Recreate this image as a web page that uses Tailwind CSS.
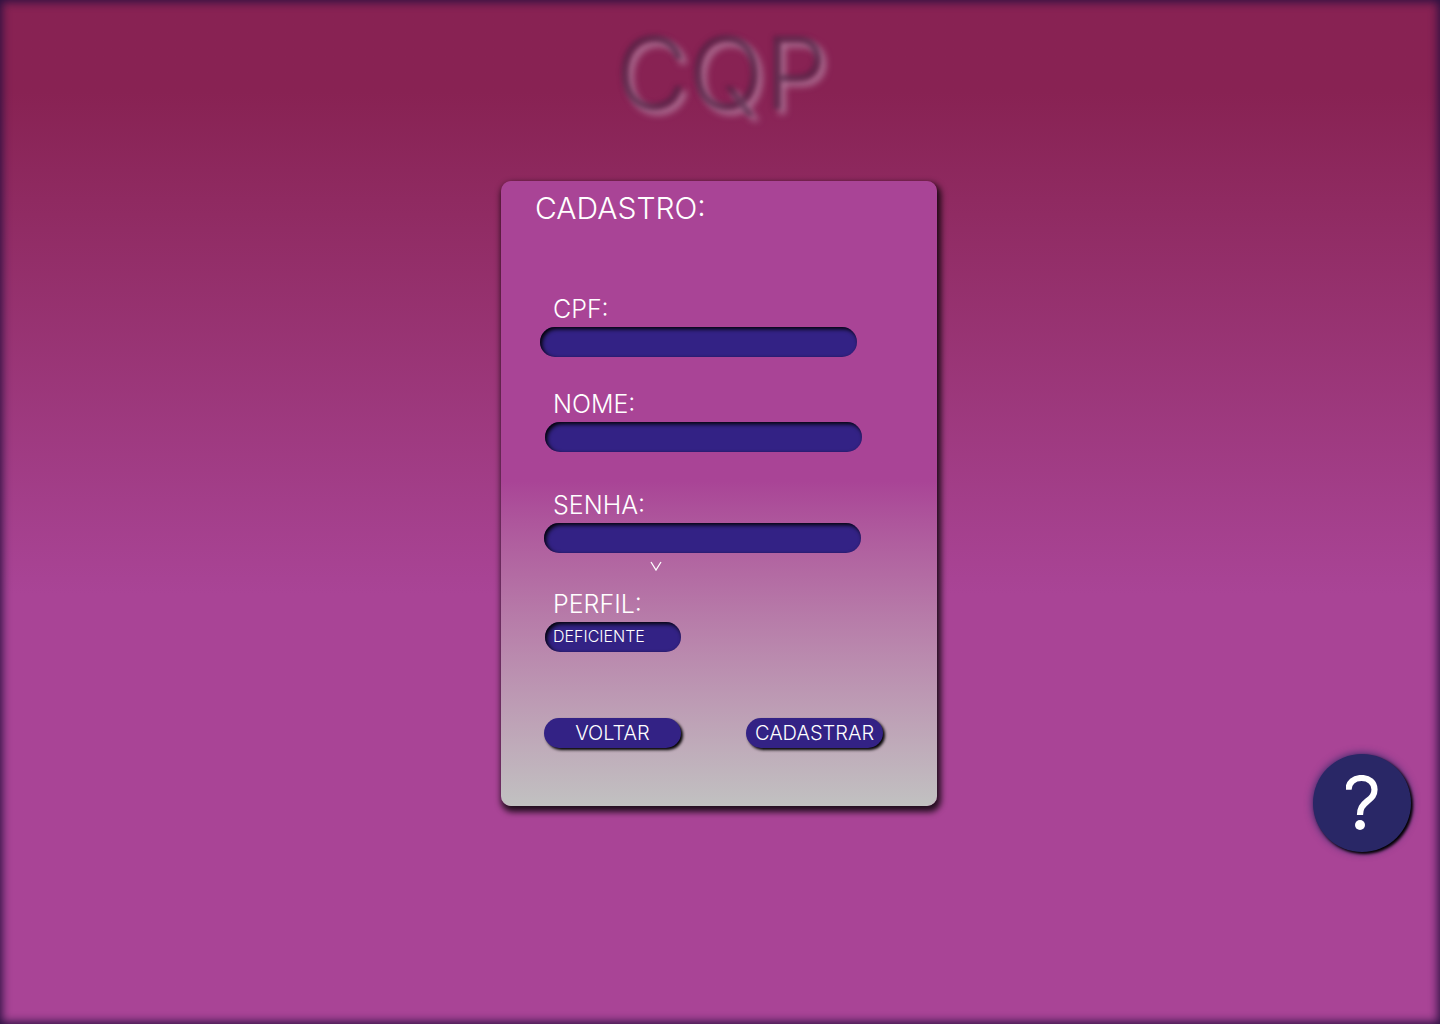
<!DOCTYPE html>
<html lang="pt-BR">
<head>
<meta charset="utf-8">
<meta name="viewport" content="width=device-width, initial-scale=1">
<title>CQP - Cadastro</title>
<script src="https://cdn.jsdelivr.net/npm/@tailwindcss/browser@4"></script>
</head>
<body class="min-h-screen bg-linear-to-b from-[#882253] from-9% to-[#a94496] to-58% font-['Inter',sans-serif] font-light text-white shadow-[inset_0_0_10px_2px_#2a1040]">
  <main class="flex min-h-screen flex-col items-center pt-[15px] pr-0.5">
    <h1 class="pl-2 text-[100px] leading-[120px] font-light text-transparent [text-shadow:-2px_-2px_5px_rgb(65_30_60/0.6),3px_3px_7px_rgb(190_145_175/0.75)]">CQP</h1>
    <form class="mt-[46px] h-[625px] w-full max-w-[436px] rounded-[10px] bg-linear-to-b from-[#a94496] from-48% to-[#c1c1c1] pt-2 shadow-[2px_4px_6px_2px_rgb(0_0_0/0.8)]">
      <h2 class="pl-[34px] text-[30px] leading-[38px]">CADASTRO:</h2>
      <div class="mt-16">
        <label for="cpf" class="block pl-[52px] text-[25px] leading-[36px]">CPF:</label>
        <input id="cpf" type="text" class="ml-[39px] block h-[30px] w-[317px] rounded-full bg-[#332285] px-3 text-base shadow-[inset_2px_2px_4px_#000] outline-none">
      </div>
      <div class="mt-[29px]">
        <label for="nome" class="block pl-[52px] text-[25px] leading-[36px]">NOME:</label>
        <input id="nome" type="text" class="ml-11 block h-[30px] w-[317px] rounded-full bg-[#332285] px-3 text-base shadow-[inset_2px_2px_4px_#000] outline-none">
      </div>
      <div class="mt-[35px]">
        <label for="senha" class="block pl-[52px] text-[25px] leading-[36px]">SENHA:</label>
        <input id="senha" type="password" class="ml-[43px] block h-[30px] w-[317px] rounded-full bg-[#332285] px-3 text-base shadow-[inset_2px_2px_4px_#000] outline-none">
      </div>
      <svg class="mt-2 ml-[149px] block h-[10px] w-3" viewBox="0 0 12 10" fill="none" stroke="white" stroke-width="1.3" aria-hidden="true"><path d="M1 1 6 9 11 1"/></svg>
      <div class="mt-[15px]">
        <label for="perfil" class="block pl-[52px] text-[25px] leading-[36px]">PERFIL:</label>
        <select id="perfil" class="ml-11 block h-[30px] w-[136px] appearance-none rounded-full bg-[#332285] pb-0.5 pl-2 text-base font-light shadow-[inset_2px_2px_4px_#000] outline-none">
          <option>DEFICIENTE</option>
        </select>
      </div>
      <div class="mt-[66px] flex justify-between pr-[54px] pl-[43px]">
        <button type="button" class="h-[30px] w-[137px] rounded-full bg-[#332285] text-xl leading-[30px] font-light shadow-[2px_2px_3px_#000]">VOLTAR</button>
        <button type="submit" class="h-[30px] w-[137px] rounded-full bg-[#332285] text-xl leading-[30px] font-light shadow-[2px_2px_3px_#000]">CADASTRAR</button>
      </div>
    </form>
  </main>
  <button type="button" aria-label="Ajuda" class="fixed right-[29px] bottom-[172px] flex size-[98px] items-center justify-center rounded-full bg-[#292766] shadow-[2px_2px_3px_#000,0_0_8px_#292766]">
    <svg class="h-[56px] w-8" viewBox="0 0 32 56" fill="none" aria-hidden="true"><path d="M2.500 14.800C2.500 7.500 8 3 15.500 3S28.500 7.500 28.500 14.500C28.500 20 26 22.500 21.500 26C16 30.500 14 33.500 14 40" stroke="white" stroke-width="6.200"/><circle cx="14" cy="50" r="5" fill="white"/></svg>
  </button>
</body>
</html>
